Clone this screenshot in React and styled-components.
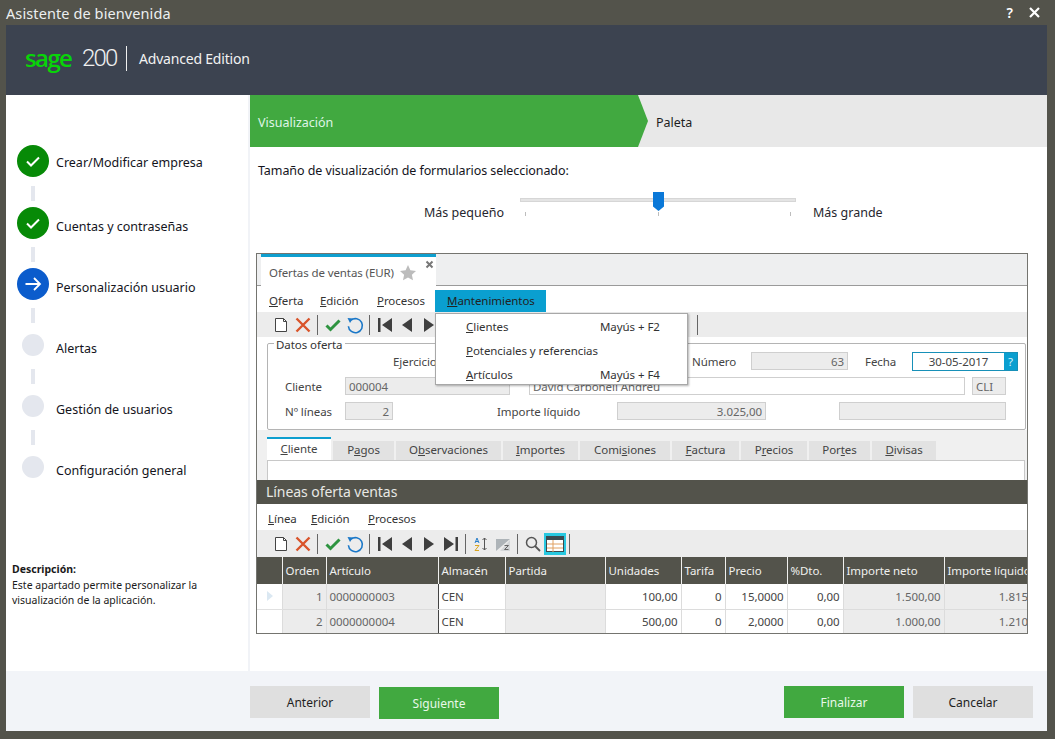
import React from "react";
import styled, { createGlobalStyle } from "styled-components";

const GlobalStyle = createGlobalStyle`
  html, body { margin: 0; padding: 0; background: #53534b; }
  * { box-sizing: border-box; }
`;

const steps = [
  { label: "Crear/Modificar empresa", status: "done" },
  { label: "Cuentas y contraseñas", status: "done" },
  { label: "Personalización usuario", status: "current" },
  { label: "Alertas", status: "pending" },
  { label: "Gestión de usuarios", status: "pending" },
  { label: "Configuración general", status: "pending" },
];

const tabs = [
  { pre: "", key: "C", post: "liente", w: 64, active: true },
  { pre: "P", key: "a", post: "gos", w: 61 },
  { pre: "O", key: "b", post: "servaciones", w: 105 },
  { pre: "", key: "I", post: "mportes", w: 75 },
  { pre: "Comi", key: "s", post: "iones", w: 90 },
  { pre: "", key: "F", post: "actura", w: 67 },
  { pre: "P", key: "r", post: "ecios", w: 66 },
  { pre: "Por", key: "t", post: "es", w: 61 },
  { pre: "", key: "D", post: "ivisas", w: 64 },
];

const columns = [
  { title: "", w: 25 },
  { title: "Orden", w: 44 },
  { title: "Artículo", w: 112 },
  { title: "Almacén", w: 67 },
  { title: "Partida", w: 100 },
  { title: "Unidades", w: 76 },
  { title: "Tarifa", w: 44 },
  { title: "Precio", w: 62 },
  { title: "%Dto.", w: 56 },
  { title: "Importe neto", w: 101 },
  { title: "Importe líquido", w: 103 },
];

const rows = [
  ["1", "0000000003", "CEN", "", "100,00", "0", "15,0000", "0,00", "1.500,00", "1.815,00"],
  ["2", "0000000004", "CEN", "", "500,00", "0", "2,0000", "0,00", "1.000,00", "1.210,00"],
];

const greyCols = [0, 1, 3, 8, 9];
const leftCols = [1, 2, 3];

function Icon({ children }) {
  return (
    <IconBox>
      <svg width="22" height="22" viewBox="0 0 22 22">
        {children}
      </svg>
    </IconBox>
  );
}

function BaseTools() {
  return (
    <>
      <Icon>
        <path d="M5.5 4.500h8l3 3v10h-11z" fill="#fff" stroke="#444" />
        <path d="M13.500 4.500v3h3" fill="none" stroke="#444" />
      </Icon>
      <Icon>
        <path d="M4.500 4.500l13 13M17.500 4.500l-13 13" stroke="#d9542b" strokeWidth="2.400" />
      </Icon>
      <Sep />
      <Icon>
        <path d="M4.500 11.500l4 4 9-9" fill="none" stroke="#2e9440" strokeWidth="3" />
      </Icon>
      <Icon>
        <path d="M7 6.200a7 7 0 1 1-2.600 6" fill="none" stroke="#1b78c8" strokeWidth="1.600" />
        <path d="M3.500 4l5.500 0.500-3 4.500z" fill="#1b78c8" />
      </Icon>
      <Sep />
      <Icon>
        <path d="M4 4h2.500v14H4zM18 4v14l-10-7z" fill="#3f3f3f" />
      </Icon>
      <Icon>
        <path d="M16 4v14L6 11z" fill="#3f3f3f" />
      </Icon>
      <Icon>
        <path d="M6 4v14l10-7z" fill="#3f3f3f" />
      </Icon>
    </>
  );
}

function App() {
  return (
    <Window>
      <GlobalStyle />
      <TitleBar>
        <TitleText>Asistente de bienvenida</TitleText>
        <TitleActions>
          <TitleGlyph>?</TitleGlyph>
          <svg width="13" height="13" viewBox="0 0 13 13">
            <path d="M2 2l9 9M11 2l-9 9" stroke="#fff" strokeWidth="2.200" />
          </svg>
        </TitleActions>
      </TitleBar>

      <Frame>
        <Header>
          <SageWord>sage</SageWord>
          <ProductNumber>200</ProductNumber>
          <HeaderRule />
          <Edition>Advanced Edition</Edition>
        </Header>

        <Body>
          <Sidebar>
            <StepList>
              {steps.map((step, i) => (
                <React.Fragment key={step.label}>
                  <Step>
                    <StepSlot>
                      <StepCircle $status={step.status}>
                        {step.status === "done" && (
                          <svg width="18" height="18" viewBox="0 0 18 18">
                            <path d="M3 9.500l4 4 8-8" fill="none" stroke="#fff" strokeWidth="2" />
                          </svg>
                        )}
                        {step.status === "current" && (
                          <svg width="18" height="18" viewBox="0 0 18 18">
                            <path d="M1.500 9h14.500M10 3l6 6-6 6" fill="none" stroke="#fff" strokeWidth="1.800" />
                          </svg>
                        )}
                      </StepCircle>
                    </StepSlot>
                    <StepLabel $low={i > 0}>{step.label}</StepLabel>
                  </Step>
                  {i < steps.length - 1 && <Connector $first={i === 0} />}
                </React.Fragment>
              ))}
            </StepList>
            <Description>
              <strong>Descripción:</strong>
              <span>Este apartado permite personalizar la visualización de la aplicación.</span>
            </Description>
          </Sidebar>

          <Main>
            <Banner>
              <BannerActive>Visualización</BannerActive>
              <BannerArrow />
              <BannerNext>Paleta</BannerNext>
            </Banner>

            <Content>
              <SizeTitle>Tamaño de visualización de formularios seleccionado:</SizeTitle>
              <SliderRow>
                <SliderLabel $align="right">Más pequeño</SliderLabel>
                <Slider>
                  <Track />
                  <Thumb />
                  <Ticks>
                    <Tick />
                    <Tick />
                    <Tick />
                  </Ticks>
                </Slider>
                <SliderLabel>Más grande</SliderLabel>
              </SliderRow>

              <FormWindow>
                <TabStrip>
                  <DocTab>
                    <DocTitle>Ofertas de ventas (EUR)</DocTitle>
                    <svg width="18" height="18" viewBox="0 0 18 18">
                      <path d="M9 1l2.400 5.200 5.600.7-4.100 3.800 1.100 5.600L9 13.600l-5 2.700 1.100-5.600L1 6.900l5.600-.7z" fill="#bcbcbc" />
                    </svg>
                    <DocClose>
                      <svg width="9" height="9" viewBox="0 0 9 9">
                        <path d="M1.500 1.500l6 6M7.500 1.500l-6 6" stroke="#777" strokeWidth="2" />
                      </svg>
                    </DocClose>
                  </DocTab>
                </TabStrip>

                <MenuBar>
                  <MenuItem $w={51}><u>O</u>ferta</MenuItem>
                  <MenuItem $w={57}><u>E</u>dición</MenuItem>
                  <MenuItem $w={58}><u>P</u>rocesos</MenuItem>
                  <ActiveMenuItem><u>M</u>antenimientos</ActiveMenuItem>
                </MenuBar>

                <Toolbar>
                  <BaseTools />
                  <ToolbarGap />
                  <Sep />
                </Toolbar>

                <PopupMenu>
                  <PopupRow>
                    <span><u>C</u>lientes</span>
                    <Shortcut>Mayús + F2</Shortcut>
                  </PopupRow>
                  <PopupRow>
                    <span><u>P</u>otenciales y referencias</span>
                  </PopupRow>
                  <PopupRow>
                    <span><u>A</u>rtículos</span>
                    <Shortcut>Mayús + F4</Shortcut>
                  </PopupRow>
                </PopupMenu>

                <DataGroup>
                  <GroupLegend>Datos oferta</GroupLegend>
                  <FieldRow>
                    <FieldLabel $w={299} $ml={108}>Ejercicio</FieldLabel>
                    <FieldLabel $w={59}>Número</FieldLabel>
                    <Field $w={97} $right>63</Field>
                    <FieldLabel $w={47} $ml={17}>Fecha</FieldLabel>
                    <DateField>
                      <DateValue>30-05-2017</DateValue>
                      <DateHelp>?</DateHelp>
                    </DateField>
                  </FieldRow>
                  <FieldRow>
                    <FieldLabel $w={60}>Cliente</FieldLabel>
                    <Field $w={165}>000004</Field>
                    <Field $w={436} $ml={19} $white>David Carbonell Andreu</Field>
                    <Field $w={34} $ml={7}>CLI</Field>
                  </FieldRow>
                  <FieldRow>
                    <FieldLabel $w={60}>Nº líneas</FieldLabel>
                    <Field $w={48} $right>2</Field>
                    <FieldLabel $w={120} $ml={104}>Importe líquido</FieldLabel>
                    <Field $w={149} $right>3.025,00</Field>
                    <Field $w={167} $ml={73} />
                  </FieldRow>
                </DataGroup>

                <TabArea>
                  <TabRow>
                    {tabs.map((tab) => (
                      <FormTab key={tab.post} $w={tab.w} $active={tab.active}>
                        {tab.pre}<u>{tab.key}</u>{tab.post}
                      </FormTab>
                    ))}
                  </TabRow>
                  <TabPanel />
                </TabArea>

                <LinesBar>Líneas oferta ventas</LinesBar>

                <MenuBar $short>
                  <MenuItem $w={43}><u>L</u>ínea</MenuItem>
                  <MenuItem $w={57}><u>E</u>dición</MenuItem>
                  <MenuItem $w={58}><u>P</u>rocesos</MenuItem>
                </MenuBar>

                <Toolbar $tall>
                  <BaseTools />
                  <Icon>
                    <path d="M4 4v14l10-7zM15.500 4H18v14h-2.500z" fill="#3f3f3f" />
                  </Icon>
                  <Sep />
                  <Icon>
                    <path d="M5 10l2-5 2 5M5.800 8.500h2.400" fill="none" stroke="#2a7fc9" />
                    <path d="M5 12.500h4l-4 5h4" fill="none" stroke="#d9a520" />
                    <path d="M14.500 5v12M12.500 7l2-2 2 2M12.500 15l2 2 2-2" fill="none" stroke="#555" />
                  </Icon>
                  <Icon>
                    <path d="M4 6h14L4 18z" fill="#aeb4b8" />
                    <path d="M18 7v11H8z" fill="#d3d6d8" />
                    <path d="M12.500 12.500h4l-4 4h4" fill="none" stroke="#666" />
                  </Icon>
                  <Sep />
                  <Icon>
                    <circle cx="9.500" cy="9.500" r="5" fill="none" stroke="#555" strokeWidth="1.500" />
                    <path d="M13 13l5 5" stroke="#555" strokeWidth="1.800" />
                  </Icon>
                  <ActiveTool>
                    <svg width="18" height="16" viewBox="0 0 18 16">
                      <rect x="0.500" y="0.500" width="17" height="15" fill="#fff" stroke="#3a4a50" />
                      <rect x="0.500" y="0.500" width="17" height="3.500" fill="#3a4a50" />
                      <path d="M1 8h16M1 12h16M7 4v12" stroke="#e0a060" />
                    </svg>
                  </ActiveTool>
                  <Sep />
                </Toolbar>

                <Grid>
                  <colgroup>
                    {columns.map((col) => (
                      <col key={col.title} width={col.w} />
                    ))}
                  </colgroup>
                  <thead>
                    <tr>
                      {columns.map((col) => (
                        <HeadCell key={col.title}>{col.title}</HeadCell>
                      ))}
                    </tr>
                  </thead>
                  <tbody>
                    {rows.map((row, r) => (
                      <tr key={row[0]}>
                        <IndicatorCell $first={r === 0}>{r === 0 && <RowMarker />}</IndicatorCell>
                        {row.map((value, c) => (
                          <BodyCell
                            key={c}
                            $grey={greyCols.includes(c)}
                            $left={leftCols.includes(c)}
                            $dark={c === 2}
                          >
                            {value}
                          </BodyCell>
                        ))}
                      </tr>
                    ))}
                  </tbody>
                </Grid>
              </FormWindow>
            </Content>
          </Main>
        </Body>

        <Footer>
          <WizardButton>Anterior</WizardButton>
          <WizardButton $primary $ml={9} $offset>Siguiente</WizardButton>
          <FooterSpace />
          <WizardButton $primary>Finalizar</WizardButton>
          <WizardButton $ml={9}>Cancelar</WizardButton>
        </Footer>
      </Frame>
    </Window>
  );
}

export default App;

const Window = styled.div`
  width: 1055px;
  height: 739px;
  overflow: hidden;
  background: #53534b;
  display: flex;
  flex-direction: column;
  font-family: "Noto Sans", "Open Sans", sans-serif;
`;

const TitleBar = styled.div`
  height: 25px;
  flex: none;
  display: flex;
  align-items: center;
  justify-content: space-between;
  padding: 0 14px 0 6px;
`;

const TitleText = styled.div`
  color: #eceff0;
  font-size: 14.5px;
  letter-spacing: 0.1px;
`;

const TitleActions = styled.div`
  display: flex;
  align-items: center;
  gap: 15px;
`;

const TitleGlyph = styled.span`
  color: #fff;
  font-size: 14px;
  font-weight: 600;
`;

const Frame = styled.div`
  width: 1041px;
  height: 706px;
  margin-left: 6px;
  display: flex;
  flex-direction: column;
  background: #fff;
`;

const Header = styled.div`
  height: 70px;
  flex: none;
  background: #3c4350;
  display: flex;
  align-items: center;
  padding: 0 0 4px 19px;
`;

const SageWord = styled.span`
  color: #08d408;
  font-family: "Open Sans", sans-serif;
  font-size: 24px;
  font-weight: 600;
  letter-spacing: -1.6px;
  width: 57px;
  line-height: 30px;
`;

const ProductNumber = styled.span`
  color: #f0f0f0;
  font-family: "Roboto", sans-serif;
  font-weight: 300;
  font-size: 24px;
  width: 44px;
  letter-spacing: -1.8px;
`;

const HeaderRule = styled.div`
  width: 1px;
  height: 25px;
  background: #f0f0f0;
`;

const Edition = styled.span`
  color: #f2f2f2;
  font-size: 14px;
  margin-left: 12px;
  letter-spacing: -0.2px;
`;

const Body = styled.div`
  flex: 1;
  display: flex;
  min-height: 0;
`;

const Sidebar = styled.aside`
  width: 244px;
  flex: none;
  border-right: 2px solid #f1f3f7;
  display: flex;
  flex-direction: column;
  padding: 50px 0 63px 11px;
`;

const StepList = styled.div`
  display: flex;
  flex-direction: column;
`;

const Step = styled.div`
  height: 32px;
  display: flex;
  align-items: center;
  gap: 7px;
`;

const StepSlot = styled.div`
  width: 32px;
  display: flex;
  justify-content: center;
`;

const StepCircle = styled.div`
  width: ${(p) => (p.$status === "pending" ? 22 : 32)}px;
  height: ${(p) => (p.$status === "pending" ? 22 : 32)}px;
  border-radius: 50%;
  display: flex;
  align-items: center;
  justify-content: center;
  background: ${(p) =>
    p.$status === "done" ? "#078a07" : p.$status === "current" ? "#0b5ccc" : "#e4e7ee"};
`;

const StepLabel = styled.span`
  color: #14141c;
  font-size: 12.5px;
  padding-top: ${(p) => (p.$low ? 6 : 2)}px;
`;

const Connector = styled.div`
  width: 4px;
  height: 15px;
  margin: ${(p) => (p.$first ? 9 : 8)}px 0 6px 14px;
  background: #e4e7ee;
`;

const Description = styled.div`
  margin: auto 0 0 -5px;
  width: 200px;
  display: flex;
  flex-direction: column;
  gap: 1px;
  color: #1a1a1a;
  font-size: 10.5px;
  line-height: 15px;

  strong {
    font-weight: 700;
  }
`;

const Main = styled.div`
  flex: 1;
  min-width: 0;
  display: flex;
  flex-direction: column;
`;

const Banner = styled.div`
  height: 52px;
  flex: none;
  display: flex;
  background: #e8e8e8;
`;

const BannerActive = styled.div`
  width: 388px;
  background: #41a940;
  color: #dff5e6;
  font-size: 12.5px;
  display: flex;
  align-items: center;
  padding: 3px 0 0 8px;
`;

const BannerArrow = styled.div`
  width: 0;
  height: 0;
  border-style: solid;
  border-width: 26px 0 26px 10px;
  border-color: transparent transparent transparent #41a940;
`;

const BannerNext = styled.div`
  color: #1e1e1e;
  font-size: 12.5px;
  display: flex;
  align-items: center;
  padding: 3px 0 0 8px;
`;

const Content = styled.div`
  flex: 1;
  padding: 15px 19px 0 6px;
  min-height: 0;
`;

const SizeTitle = styled.div`
  color: #14141c;
  font-size: 12.5px;
  letter-spacing: -0.08px;
  line-height: 18px;
  padding-left: 2px;
`;

const SliderRow = styled.div`
  margin: 12px 0 0 167px;
  height: 50px;
  display: flex;
  align-items: flex-start;
`;

const SliderLabel = styled.div`
  color: #26262e;
  font-size: 12.5px;
  line-height: 18px;
  margin-top: 12px;
  text-align: ${(p) => p.$align || "left"};
  width: ${(p) => (p.$align ? 81 : 80)}px;
`;

const Slider = styled.div`
  position: relative;
  width: 276px;
  height: 30px;
  margin: 0 17px 0 16px;
`;

const Track = styled.div`
  margin-top: 6px;
  height: 4px;
  background: #e4e4e4;
  border: 1px solid #d6d6d6;
`;

const Thumb = styled.div`
  position: absolute;
  left: 133px;
  top: 0;
  width: 11px;
  height: 19px;
  background: #0a78d8;
  clip-path: polygon(0 0, 100% 0, 100% 76%, 50% 100%, 0 76%);
`;

const Ticks = styled.div`
  display: flex;
  justify-content: space-between;
  margin-top: 10px;
  padding: 0 5px;
`;

const Tick = styled.div`
  width: 1px;
  height: 4px;
  background: #bdbdbd;
`;

const FormWindow = styled.div`
  position: relative;
  width: 772px;
  height: 381px;
  margin-top: 11px;
  border: 1px solid #74746f;
  overflow: hidden;
  background: #fff;
  color: #444;
  font-size: 11.5px;
  letter-spacing: -0.06px;
`;

const TabStrip = styled.div`
  height: 32px;
  background: #eeeff0;
  border-bottom: 1px solid #9a9a9a;
  padding-left: 4px;
`;

const DocTab = styled.div`
  position: relative;
  width: 175px;
  height: 32px;
  background: #fff;
  border-top: 3px solid #0e9fcf;
  display: flex;
  align-items: center;
  gap: 5px;
  padding: 2px 0 0 8px;
`;

const DocTitle = styled.span`
  color: #555;
  font-size: 11.5px;
  letter-spacing: -0.1px;
`;

const DocClose = styled.div`
  position: absolute;
  right: 2px;
  top: 3px;
  display: flex;
`;

const MenuBar = styled.div`
  height: 26px;
  background: #fff;
  display: flex;
  align-items: flex-end;
  padding-left: ${(p) => (p.$short ? 11 : 12)}px;
`;

const MenuItem = styled.div`
  width: ${(p) => p.$w}px;
  height: 22px;
  line-height: 22px;
  color: #333;
`;

const ActiveMenuItem = styled.div`
  width: 111px;
  height: 22px;
  line-height: 22px;
  padding-left: 12px;
  background: #0a9fd0;
  color: #222;
`;

const Toolbar = styled.div`
  height: ${(p) => (p.$tall ? 27 : 25)}px;
  background: #ececec;
  display: flex;
  align-items: center;
  padding-left: 13px;
`;

const IconBox = styled.div`
  width: 22px;
  height: 22px;
  flex: none;
  display: flex;
`;

const Sep = styled.div`
  width: 1px;
  height: 20px;
  margin: 0 4px 0 3px;
  flex: none;
  background: #666;
`;

const ToolbarGap = styled.div`
  width: 254px;
  flex: none;
`;

const ActiveTool = styled.div`
  width: 22px;
  height: 22px;
  flex: none;
  display: flex;
  align-items: center;
  justify-content: center;
  background: #27c8e0;
`;

const PopupMenu = styled.div`
  position: absolute;
  left: 178px;
  top: 59px;
  width: 253px;
  height: 72px;
  background: #fff;
  border: 1px solid #a8a8a8;
  box-shadow: 1px 1px 2px rgba(0, 0, 0, 0.3);
  z-index: 2;
`;

const PopupRow = styled.div`
  height: 24px;
  display: flex;
  align-items: center;
  padding-left: 30px;
  color: #333;
`;

const Shortcut = styled.span`
  position: absolute;
  left: 164px;
`;

const DataGroup = styled.fieldset`
  margin: -2px 1px 0 10px;
  padding: 0 0 7px 17px;
  height: 95px;
  border: 1px solid #b4b4b4;
  border-radius: 2px;
  display: flex;
  flex-direction: column;
  gap: 7px;
  min-width: 0;
`;

const GroupLegend = styled.legend`
  padding: 3px 2px 0;
  margin-left: -11px;
  line-height: 14px;
  color: #333;
`;

const FieldRow = styled.div`
  display: flex;
  height: 18px;
  align-items: center;
`;

const FieldLabel = styled.div`
  flex: none;
  width: ${(p) => p.$w}px;
  margin-left: ${(p) => p.$ml || 0}px;
`;

const Field = styled.div`
  flex: none;
  width: ${(p) => p.$w}px;
  height: 18px;
  margin-left: ${(p) => p.$ml || 0}px;
  padding: 0 3px;
  line-height: 18px;
  text-align: ${(p) => (p.$right ? "right" : "left")};
  background: ${(p) => (p.$white ? "#fff" : "#ececec")};
  border: 1px solid #cfcfcf;
  color: #666;
`;

const DateField = styled.div`
  flex: none;
  width: 106px;
  height: 19px;
  display: flex;
  border: 1px solid #1790b8;
  background: #fff;
`;

const DateValue = styled.span`
  flex: 1;
  text-align: center;
  line-height: 17px;
`;

const DateHelp = styled.span`
  width: 13px;
  background: #0a9fd0;
  color: #d8f2fb;
  text-align: center;
  line-height: 17px;
`;

const TabArea = styled.div`
  background: #f0f0f0;
  padding: 7px 2px 0 10px;
`;

const TabRow = styled.div`
  display: flex;
  gap: 2px;
  height: 23px;
  align-items: flex-end;
`;

const FormTab = styled.div`
  width: ${(p) => p.$w}px;
  height: ${(p) => (p.$active ? 23 : 19)}px;
  text-align: center;
  line-height: ${(p) => (p.$active ? 20 : 17)}px;
  background: ${(p) => (p.$active ? "#fff" : "#e2e2e2")};
  border-top: ${(p) => (p.$active ? "2px solid #0e9fcf" : "none")};
  color: #444;
`;

const TabPanel = styled.div`
  height: 20px;
  background: #fff;
  border: 1px solid #c8c8c8;
  border-bottom: none;
`;

const LinesBar = styled.div`
  height: 24px;
  background: #53534b;
  color: #e8e8e4;
  font-size: 14px;
  line-height: 24px;
  padding-left: 9px;
`;

const Grid = styled.table`
  table-layout: fixed;
  border-collapse: collapse;
  width: 790px;
  font-size: 11.5px;
`;

const HeadCell = styled.th`
  height: 27px;
  padding: 0 3px;
  background: #53534b;
  color: #f0f0ee;
  font-weight: 400;
  text-align: left;
  white-space: nowrap;
  overflow: hidden;
  border-left: 1px solid #f0f0ee;

  &:first-child {
    border-left: none;
  }
`;

const IndicatorCell = styled.td`
  height: ${(p) => (p.$first ? 25 : 24)}px;
  padding: 0 0 0 10px;
  background: #fff;
  border-bottom: 1px solid #e0e0e0;
`;

const RowMarker = styled.div`
  width: 0;
  height: 0;
  border-style: solid;
  border-width: 5px 0 5px 6px;
  border-color: transparent transparent transparent #dbe8f2;
`;

const BodyCell = styled.td`
  padding: 0 3px;
  white-space: nowrap;
  overflow: hidden;
  text-align: ${(p) => (p.$left ? "left" : "right")};
  background: ${(p) => (p.$grey ? "#ececec" : "#fff")};
  border-left: 1px solid ${(p) => (p.$dark ? "#444" : "#dcdcdc")};
  border-bottom: 1px solid #dcdcdc;
  color: ${(p) => (p.$grey ? "#666" : "#444")};
`;

const Footer = styled.div`
  height: 60px;
  flex: none;
  background: #f2f4f8;
  display: flex;
  align-items: flex-start;
  padding: 15px 14px 0 244px;
`;

const FooterSpace = styled.div`
  flex: 1;
`;

const WizardButton = styled.div`
  width: 120px;
  height: 32px;
  margin-left: ${(p) => p.$ml || 0}px;
  margin-top: ${(p) => (p.$offset ? 1 : 0)}px;
  display: flex;
  align-items: center;
  justify-content: center;
  font-size: 12px;
  background: ${(p) => (p.$primary ? "#41a940" : "#dfdfdf")};
  color: ${(p) => (p.$primary ? "#e8f8ea" : "#1e1e1e")};
`;
